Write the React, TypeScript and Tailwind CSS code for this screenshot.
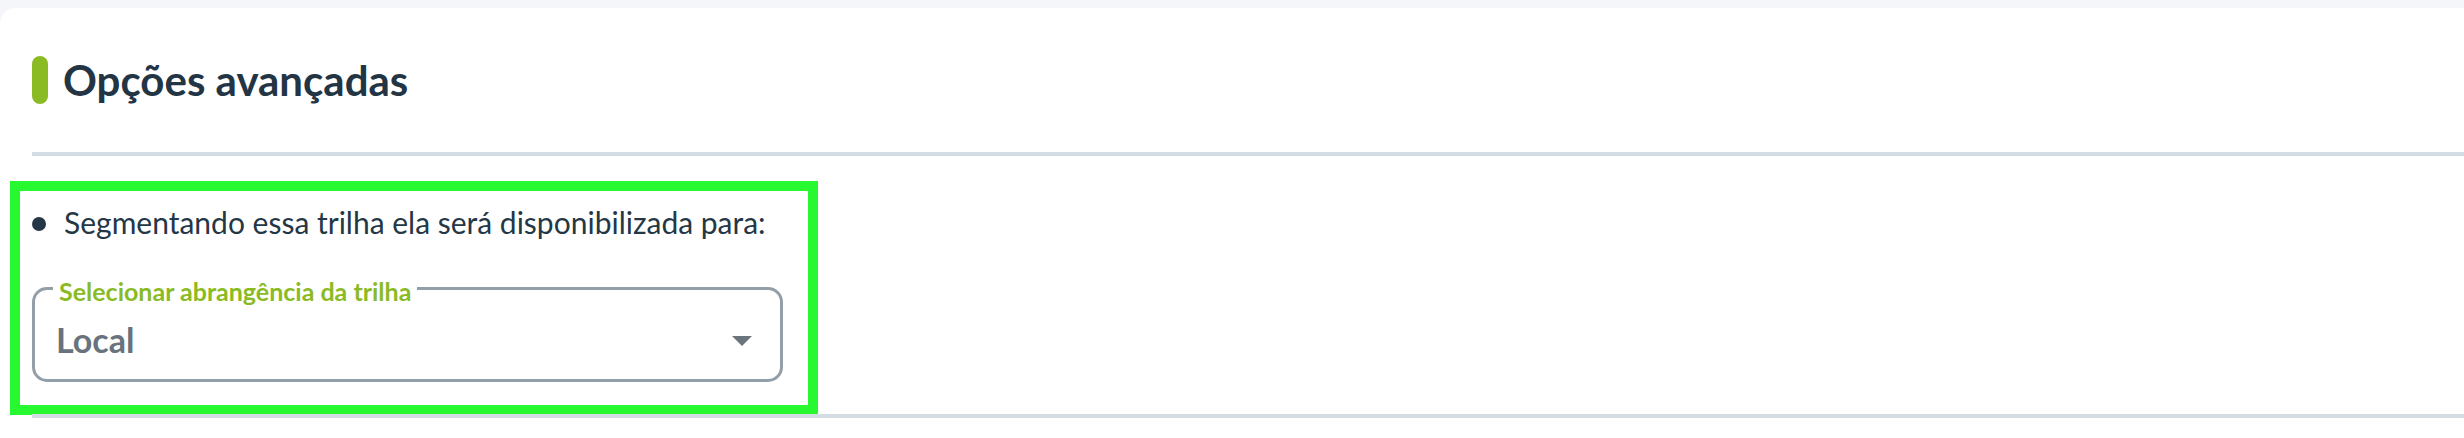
import React from "react";

export default function App() {
  return (
    <div
      className="w-[2464px] h-[438px] bg-[#f5f6fa] pt-[8px] overflow-hidden"
      style={{ fontFamily: "Lato, 'Noto Sans', sans-serif" }}
    >
      <div className="h-full bg-white rounded-tl-[16px] pl-[32px] pt-[48px] flex flex-col">
        {/* Header */}
        <div className="flex items-center h-[48px] gap-[15px]">
          <div className="w-[16px] h-[48px] shrink-0 rounded-full bg-[#8bbb24]" />
          <h2 className="text-[42px] leading-[1.2] font-bold text-[#233545]">
            Opções avançadas
          </h2>
        </div>

        <div className="mt-[48px] h-[4px] bg-[#d5dde4]" />

        {/* Highlighted section */}
        <div className="mt-[25px] -ml-[22px] w-[808px] h-[234px] border-[10px] border-[#27f82f] pl-[12px] pt-[13px] flex flex-col">
          <div className="flex items-center gap-[18px]">
            <span className="w-[14px] h-[14px] shrink-0 rounded-full bg-[#243746] mt-[3px]" />
            <p className="text-[30px] leading-[1.2] text-[#243746]">
              Segmentando essa trilha ela será disponibilizada para:
            </p>
          </div>

          <fieldset className="mt-[30px] w-[751px] border-[3px] border-[#939fa8] rounded-[15px]">
            <legend className="ml-[18px] px-[6px] pt-[6px] text-[25px] leading-[1.2] font-bold text-[#8bbb24]">
              Selecionar abrangência da trilha
            </legend>
            <div className="h-[73px] pb-[5px] flex items-center justify-between pl-[21px] pr-[28px]">
              <span className="text-[34px] leading-[1.2] font-bold text-[#68737d]">Local</span>
              <svg width="20" height="10" viewBox="0 0 20 10" className="mt-[2px] shrink-0">
                <path d="M0 0 L20 0 L10 10 Z" fill="#6b757e" />
              </svg>
            </div>
          </fieldset>
        </div>

        <div className="-mt-[1px] h-[4px] bg-[#d5dde4]" />
      </div>
    </div>
  );
}
